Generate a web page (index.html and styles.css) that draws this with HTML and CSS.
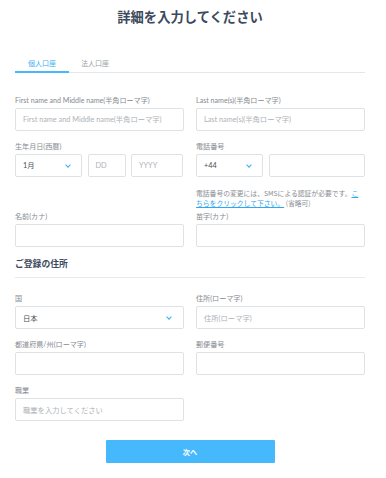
FILE: index.html
```html
<!DOCTYPE html>
<html lang="ja">
<head>
<meta charset="utf-8">
<link rel="stylesheet" href="styles.css">
</head>
<body>
<div class="page">
  <h1 class="title">詳細を入力してください</h1>
  <div class="tabs">
    <div class="tab active">個人口座</div>
    <div class="tab">法人口座</div>
  </div>

  <div class="row first">
    <div class="field">
      <div class="label">First name and Middle name(半角ローマ字)</div>
      <div class="input placeholder">First name and Middle name(半角ローマ字)</div>
    </div>
    <div class="field">
      <div class="label">Last name(s)(半角ローマ字)</div>
      <div class="input placeholder">Last name(s)(半角ローマ字)</div>
    </div>
  </div>

  <div class="row tight">
    <div class="field">
      <div class="label">生年月日(西暦)</div>
      <div class="group dob">
        <div class="input select">1月<span class="chev"></span></div>
        <div class="input placeholder">DD</div>
        <div class="input placeholder">YYYY</div>
      </div>
    </div>
    <div class="field">
      <div class="label">電話番号</div>
      <div class="group phone">
        <div class="input select">+44<span class="chev"></span></div>
        <div class="input"></div>
      </div>
      <p class="note">電話番号の変更には、SMSによる認証が必要です。<a class="link" href="#">こちらをクリックして下さい。</a> (省略可)</p>
    </div>
  </div>

  <div class="row">
    <div class="field">
      <div class="label">名前(カナ)</div>
      <div class="input"></div>
    </div>
    <div class="field">
      <div class="label">苗字(カナ)</div>
      <div class="input"></div>
    </div>
  </div>

  <h2 class="section">ご登録の住所</h2>

  <div class="row">
    <div class="field">
      <div class="label">国</div>
      <div class="input select wide">日本<span class="chev"></span></div>
    </div>
    <div class="field">
      <div class="label">住所(ローマ字)</div>
      <div class="input placeholder">住所(ローマ字)</div>
    </div>
  </div>

  <div class="row">
    <div class="field">
      <div class="label">都道府県/州(ローマ字)</div>
      <div class="input"></div>
    </div>
    <div class="field">
      <div class="label">郵便番号</div>
      <div class="input"></div>
    </div>
  </div>

  <div class="row">
    <div class="field">
      <div class="label">職業</div>
      <div class="input placeholder">職業を入力してください</div>
    </div>
    <div class="field"></div>
  </div>

  <div class="actions">
    <button class="next" type="button">次へ</button>
  </div>
</div>
</body>
</html>
```

FILE: styles.css
```css
html, body {
  margin: 0;
  padding: 0;
  background: #ffffff;
}

body {
  font-family: Lato, "Noto Sans CJK JP", sans-serif;
  color: #444;
}

.page {
  width: 350px;
  padding: 0 21px 0 15px;
}

.title {
  margin: 7px 0 0;
  font-family: "Noto Sans CJK JP", sans-serif;
  font-size: 13.3px;
  line-height: 20px;
  font-weight: 700;
  color: #3c4a5e;
  text-align: center;
}

.tabs {
  display: flex;
  margin-top: 30.5px;
  border-bottom: 1px solid #e4e7ea;
}

.tab {
  padding: 0 13px 3.5px;
  font-family: "Noto Sans CJK JP", sans-serif;
  font-size: 7px;
  line-height: 10px;
  color: #9a9ea3;
  border-bottom: 2px solid transparent;
  margin-bottom: -1px;
}

.tab + .tab {
  padding-left: 12px;
}

.tab.active {
  color: #3aaef2;
  border-bottom-color: #48b8f8;
}

.row {
  display: grid;
  grid-template-columns: 169px 169px;
  column-gap: 12px;
  margin-bottom: 11px;
}

.row.first {
  margin-top: 22.5px;
}

.row.tight {
  margin-bottom: 4px;
}

.label {
  font-size: 7.1px;
  line-height: 9px;
  color: #868a90;
  margin-bottom: 3px;
  white-space: nowrap;
}

.input {
  box-sizing: border-box;
  height: 23px;
  border: 1px solid #dfe2e5;
  border-radius: 2px;
  padding: 0 7px;
  display: flex;
  align-items: center;
  font-size: 7.3px;
  color: #4a4f55;
  position: relative;
  background: #fff;
  white-space: nowrap;
}

.input.placeholder {
  color: #aeb2b7;
}

.group {
  display: flex;
  gap: 5.5px;
}

.dob .input:nth-child(1) { width: 67px; }
.dob .input:nth-child(2) { width: 38px; }
.dob .input:nth-child(3) { width: 52px; }

.phone .input:nth-child(1) { width: 67px; }
.phone .input:nth-child(2) { flex: 1; }

.chev {
  position: absolute;
  right: 11px;
  top: 8px;
  width: 3px;
  height: 3px;
  border-right: 1.5px solid #3aaef2;
  border-bottom: 1.5px solid #3aaef2;
  transform: rotate(45deg);
}

.select.wide .chev {
  right: 12px;
}

.note {
  margin: 11px 4px 0 0;
  font-family: "Noto Sans CJK JP", sans-serif;
  font-size: 6.8px;
  line-height: 10px;
  color: #8a8e94;
}

.link {
  color: #2ea6f0;
  text-decoration: underline;
}

.section {
  margin: 0;
  padding-bottom: 7px;
  border-bottom: 1px solid #e8eaec;
  font-family: "Noto Sans CJK JP", sans-serif;
  font-size: 8.8px;
  line-height: 12px;
  font-weight: 700;
  color: #3c4a5e;
  margin-bottom: 16.5px;
}

.actions {
  display: flex;
  justify-content: center;
  padding-top: 8px;
}

.next {
  width: 169px;
  height: 23px;
  border: 0;
  border-radius: 1px;
  background: #45b9fc;
  color: #ffffff;
  font-family: "Noto Sans CJK JP", sans-serif;
  font-size: 7.2px;
  font-weight: 700;
  padding: 0;
}
```
